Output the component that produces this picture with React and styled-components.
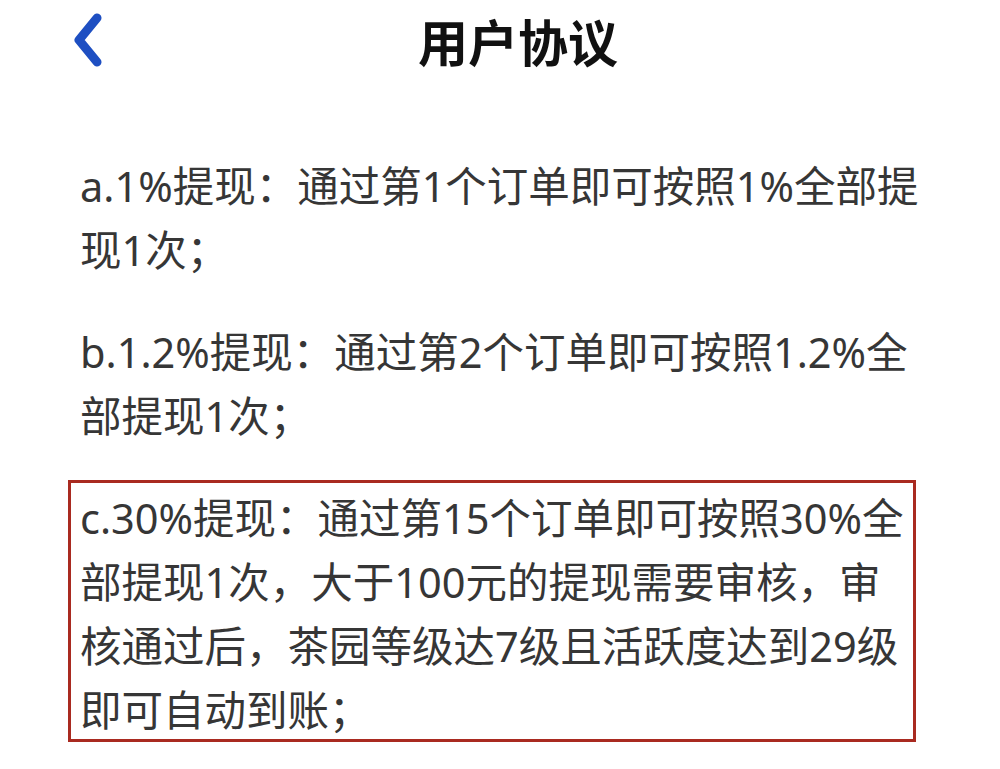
import styled, { createGlobalStyle } from 'styled-components';

const GlobalStyle = createGlobalStyle`
  html, body {
    margin: 0;
    padding: 0;
    background: #ffffff;
  }
  body {
    font-family: "Noto Sans", "Noto Sans CJK SC", sans-serif;
  }
`;

const clauses = [
  { id: 'a', text: 'a.1%提现：通过第1个订单即可按照1%全部提现1次；' },
  { id: 'b', text: 'b.1.2%提现：通过第2个订单即可按照1.2%全部提现1次；' },
  {
    id: 'c',
    text: 'c.30%提现：通过第15个订单即可按照30%全部提现1次，大于100元的提现需要审核，审核通过后，茶园等级达7级且活跃度达到29级即可自动到账；',
    marked: true,
  },
];

const App = () => {
  return (
    <>
      <GlobalStyle />
      <StyledPage>
        <StyledHeader>
          <StyledBack aria-label='back'>
            <svg width='32' height='56' viewBox='0 0 32 56'>
              <path
                d='M25 6 L7 28 L25 50'
                fill='none'
                stroke='#1e4fc2'
                strokeWidth='9'
                strokeLinecap='round'
                strokeLinejoin='round'
              />
            </svg>
          </StyledBack>
          <StyledTitle>用户协议</StyledTitle>
        </StyledHeader>
        <StyledBody>
          {clauses.map((clause) => (
            <StyledClause key={clause.id} $marked={clause.marked}>
              {clause.text}
            </StyledClause>
          ))}
        </StyledBody>
      </StyledPage>
    </>
  );
};

const StyledPage = styled.div`
  width: 1000px;
  min-height: 769px;
  background: #ffffff;
`;

const StyledHeader = styled.header`
  display: flex;
  align-items: center;
  height: 80px;
  padding-left: 72px;
`;

const StyledBack = styled.button`
  display: flex;
  align-items: center;
  width: 38px;
  padding: 0;
  border: none;
  background: none;
`;

const StyledTitle = styled.h1`
  flex: 1;
  margin: 0;
  padding-right: 74px;
  text-align: center;
  font-family: "Noto Sans CJK SC", sans-serif;
  font-size: 50px;
  line-height: 60px;
  font-weight: 700;
  color: #111111;
`;

const StyledBody = styled.main`
  display: flex;
  flex-direction: column;
  gap: 38px;
  padding: 74px 80px 0 80px;
`;

const StyledClause = styled.p`
  position: relative;
  margin: 0;
  font-size: 41.5px;
  line-height: 64px;
  color: #363636;
  &::before {
    content: '';
    display: ${(props) => (props.$marked ? 'block' : 'none')};
    position: absolute;
    top: -6px;
    left: -12px;
    right: 4px;
    bottom: 0;
    border: 3px solid #a92a20;
    pointer-events: none;
  }
`;

export default App;
